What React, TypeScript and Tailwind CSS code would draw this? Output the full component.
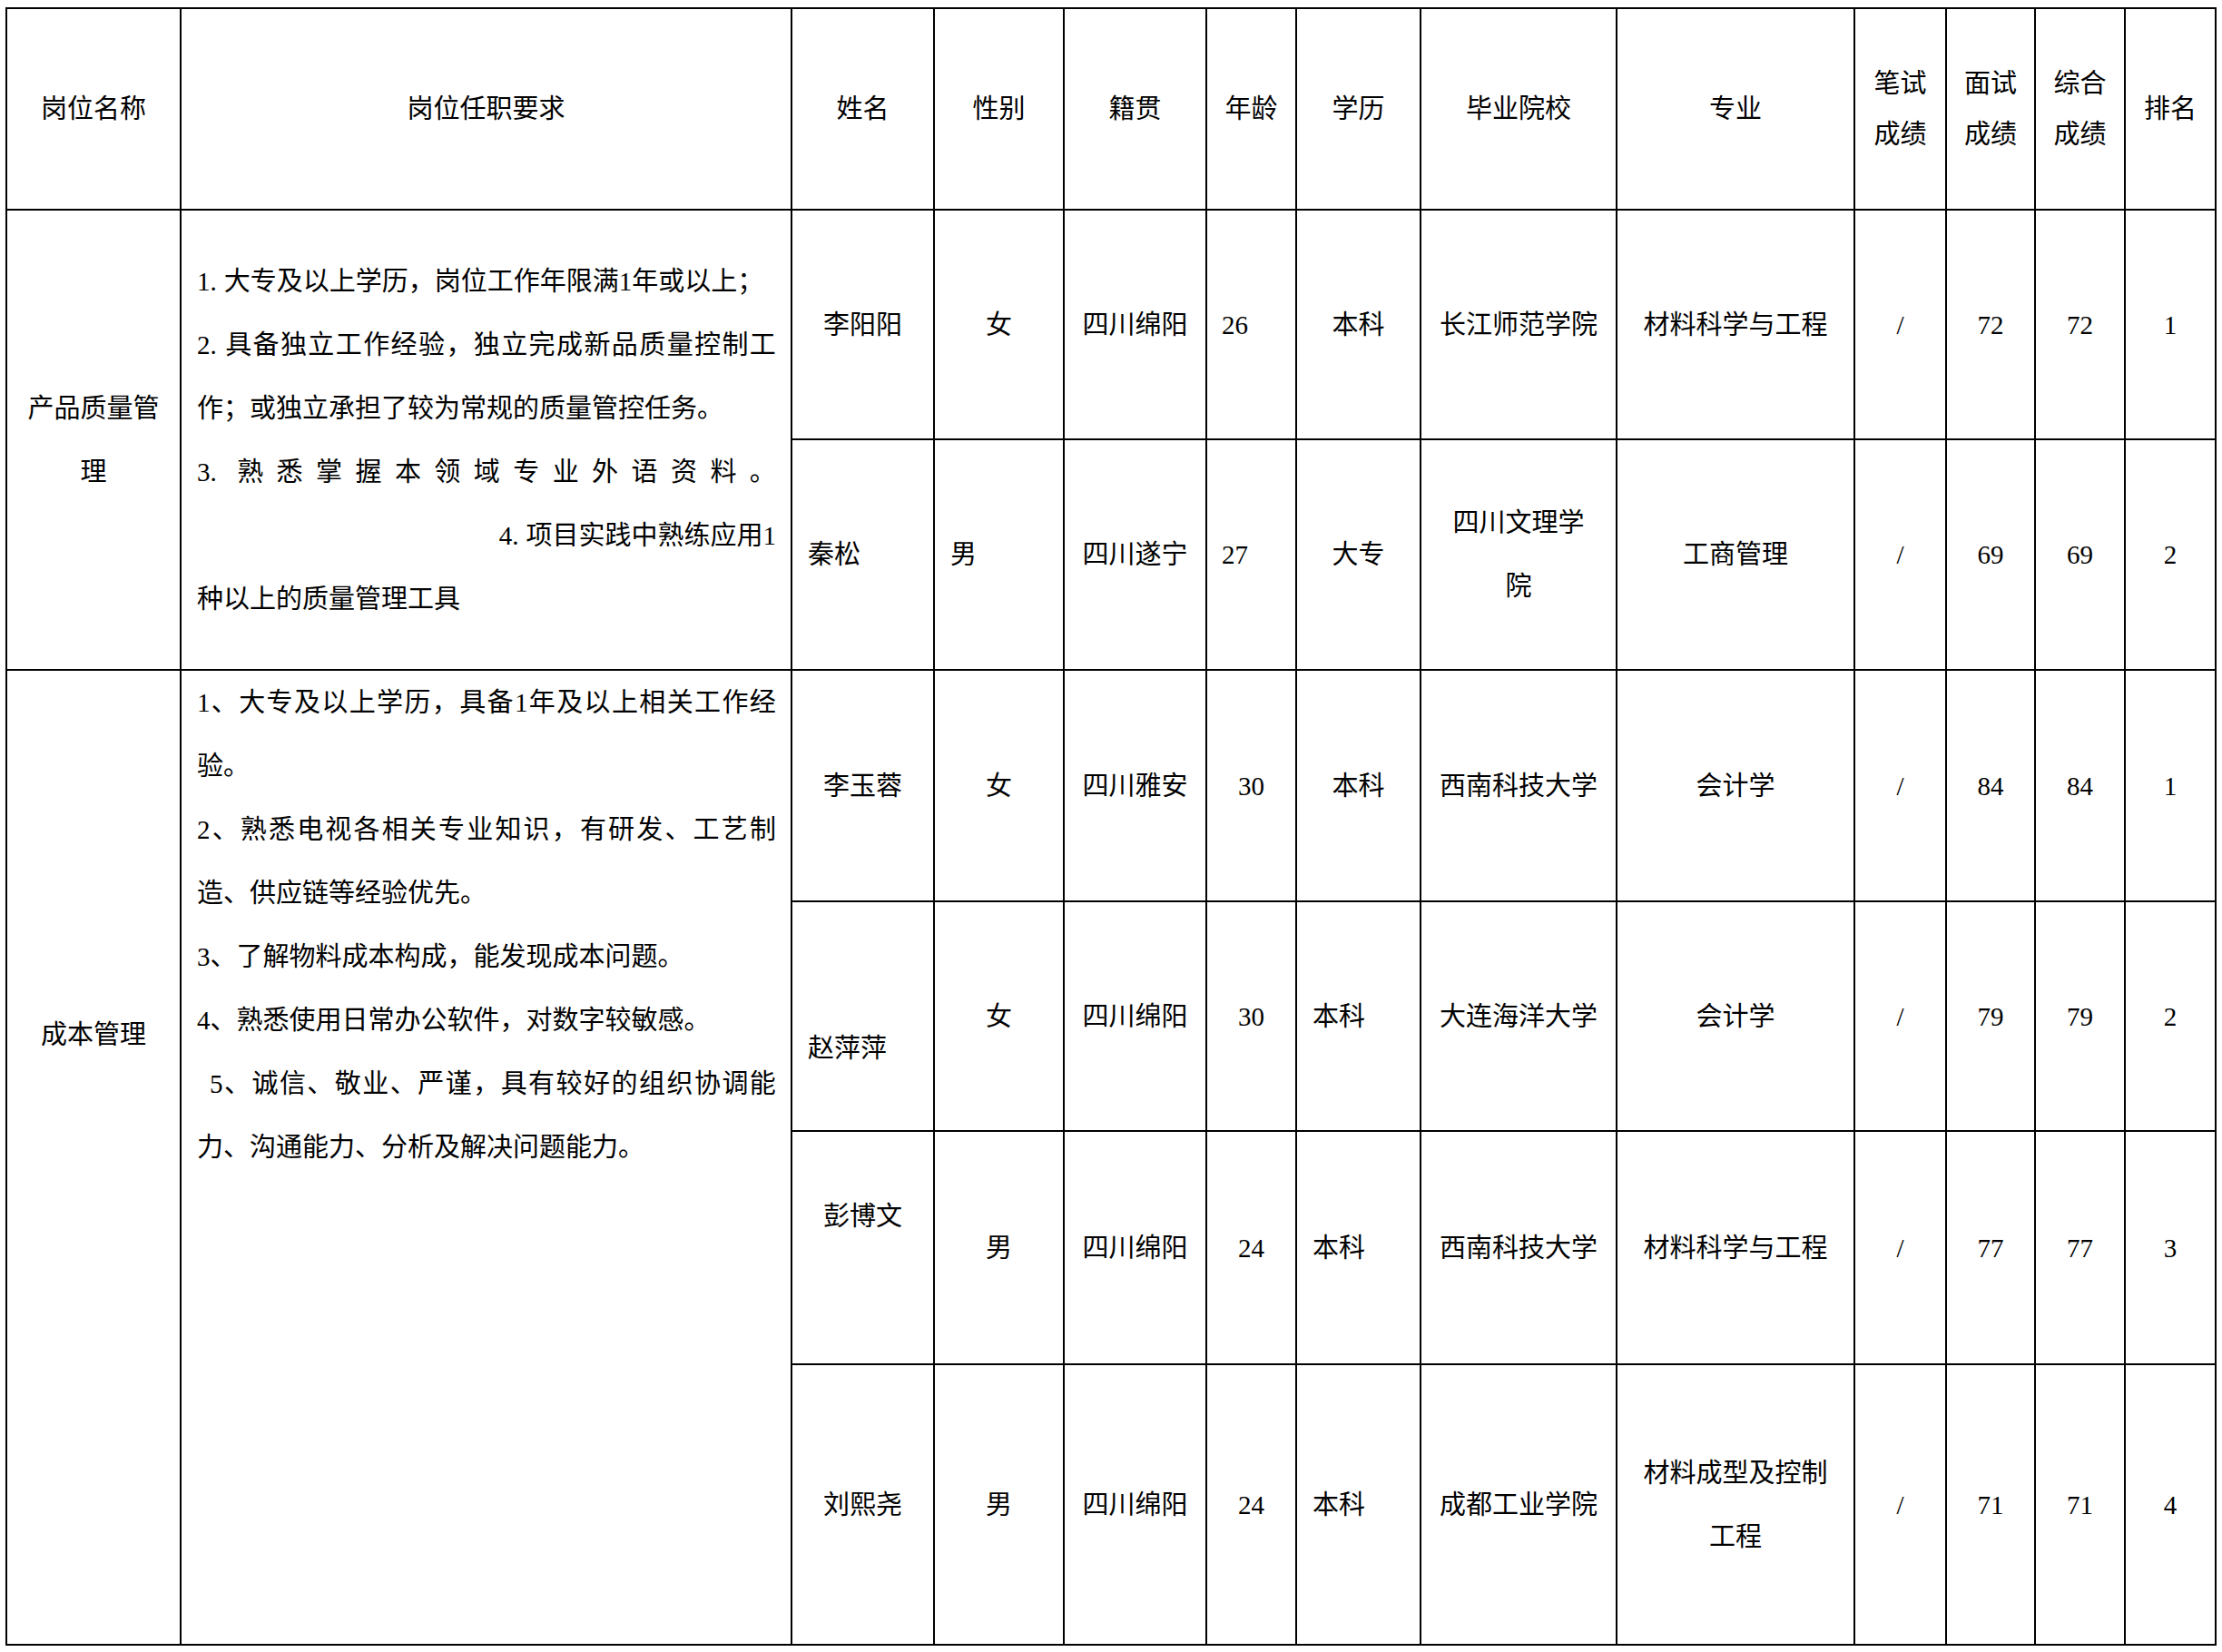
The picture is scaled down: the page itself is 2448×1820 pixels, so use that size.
import type { ReactNode } from "react";
import clsx from "clsx";

// one visual line stretched edge to edge, like Word's justified lines
function Spread({ text, className }: { text: string; className?: string }) {
  const tokens = text.match(/[0-9A-Za-z.]+|./gu) ?? [];
  return (
    <div className={clsx("flex justify-between", className)}>
      {tokens.map((t, i) => (
        <span key={i} className={t.endsWith(".") ? "pr-[8px]" : undefined}>
          {t}
        </span>
      ))}
    </div>
  );
}

function Cell({
  children,
  className,
  lead = "leading-[70px]",
}: {
  children?: ReactNode;
  className?: string;
  lead?: string;
}) {
  return (
    <div
      className={clsx(
        "flex items-center justify-center whitespace-nowrap bg-white text-center",
        lead,
        className
      )}
    >
      {children}
    </div>
  );
}

function Head({ children }: { children: ReactNode }) {
  return <Cell lead="leading-[56px]">{children}</Cell>;
}

function Num({ n }: { n: string }) {
  return <span className="pr-[8px]">{n}</span>;
}

const LEFT = "justify-start pl-[17px] text-left";

type Row = {
  name: ReactNode;
  nameCls?: string;
  gender: string;
  genderCls?: string;
  origin: string;
  age: string;
  ageCls?: string;
  edu: string;
  eduCls?: string;
  school: ReactNode;
  major: ReactNode;
  interview: string;
  total: string;
  rank: string;
};

const rows: Row[] = [
  {
    name: "李阳阳",
    gender: "女",
    origin: "四川绵阳",
    age: "26",
    ageCls: "justify-start pl-[16px]",
    edu: "本科",
    school: "长江师范学院",
    major: "材料科学与工程",
    interview: "72",
    total: "72",
    rank: "1",
  },
  {
    name: "秦松",
    nameCls: LEFT,
    gender: "男",
    genderCls: LEFT,
    origin: "四川遂宁",
    age: "27",
    ageCls: "justify-start pl-[16px]",
    edu: "大专",
    school: (
      <>
        四川文理学
        <br />院
      </>
    ),
    major: "工商管理",
    interview: "69",
    total: "69",
    rank: "2",
  },
  {
    name: "李玉蓉",
    gender: "女",
    origin: "四川雅安",
    age: "30",
    edu: "本科",
    school: "西南科技大学",
    major: "会计学",
    interview: "84",
    total: "84",
    rank: "1",
  },
  {
    name: "赵萍萍",
    nameCls: clsx(LEFT, "pt-[70px]"),
    gender: "女",
    origin: "四川绵阳",
    age: "30",
    edu: "本科",
    eduCls: LEFT,
    school: "大连海洋大学",
    major: "会计学",
    interview: "79",
    total: "79",
    rank: "2",
  },
  {
    name: "彭博文",
    nameCls: "pb-[70px]",
    gender: "男",
    origin: "四川绵阳",
    age: "24",
    edu: "本科",
    eduCls: LEFT,
    school: "西南科技大学",
    major: "材料科学与工程",
    interview: "77",
    total: "77",
    rank: "3",
  },
  {
    name: "刘熙尧",
    gender: "男",
    origin: "四川绵阳",
    age: "24",
    edu: "本科",
    eduCls: LEFT,
    school: "成都工业学院",
    major: (
      <>
        材料成型及控制
        <br />
        工程
      </>
    ),
    interview: "71",
    total: "71",
    rank: "4",
  },
];

function RowCells({ r }: { r: Row }) {
  return (
    <>
      <Cell className={r.nameCls}>{r.name}</Cell>
      <Cell className={r.genderCls}>{r.gender}</Cell>
      <Cell>{r.origin}</Cell>
      <Cell className={r.ageCls}>{r.age}</Cell>
      <Cell className={r.eduCls}>{r.edu}</Cell>
      <Cell>{r.school}</Cell>
      <Cell>{r.major}</Cell>
      <Cell>/</Cell>
      <Cell>{r.interview}</Cell>
      <Cell>{r.total}</Cell>
      <Cell>{r.rank}</Cell>
    </>
  );
}

export default function App() {
  return (
    <div className="min-h-screen bg-white pl-[6px] pt-[8px] font-['Liberation_Serif','Noto_Sans_CJK_SC',serif] text-[29px] text-black">
      <div className="grid w-fit grid-cols-[190px_671px_155px_141px_155px_97px_135px_214px_260px_99px_96px_97px_98px] grid-rows-[220px_251px_252px_253px_251px_255px_307px] gap-[2px] bg-black p-[2px]">
        <Head>岗位名称</Head>
        <Head>岗位任职要求</Head>
        <Head>姓名</Head>
        <Head>性别</Head>
        <Head>籍贯</Head>
        <Head>年龄</Head>
        <Head>学历</Head>
        <Head>毕业院校</Head>
        <Head>专业</Head>
        <Head>
          笔试
          <br />
          成绩
        </Head>
        <Head>
          面试
          <br />
          成绩
        </Head>
        <Head>
          综合
          <br />
          成绩
        </Head>
        <Head>排名</Head>

        <Cell className="row-span-2">
          产品质量管
          <br />理
        </Cell>
        <div className="row-span-2 flex flex-col justify-center whitespace-nowrap bg-white pl-[17px] pr-[16px] leading-[70px]">
          <div>
            <Num n="1." />
            大专及以上学历，岗位工作年限满1年或以上；
          </div>
          <Spread text="2.具备独立工作经验，独立完成新品质量控制工" />
          <div>作；或独立承担了较为常规的质量管控任务。</div>
          <Spread text="3.熟悉掌握本领域专业外语资料。" />
          <div className="text-right">
            <Num n="4." />
            项目实践中熟练应用1
          </div>
          <div>种以上的质量管理工具</div>
        </div>
        <RowCells r={rows[0]} />
        <RowCells r={rows[1]} />

        <Cell className="row-span-4 pb-[270px]">成本管理</Cell>
        <div className="row-span-4 flex flex-col whitespace-nowrap bg-white pl-[17px] pr-[16px] leading-[70px]">
          <Spread text="1、大专及以上学历，具备1年及以上相关工作经" />
          <div>验。</div>
          <Spread text="2、熟悉电视各相关专业知识，有研发、工艺制" />
          <div>造、供应链等经验优先。</div>
          <div>3、了解物料成本构成，能发现成本问题。</div>
          <div>4、熟悉使用日常办公软件，对数字较敏感。</div>
          <Spread text="5、诚信、敬业、严谨，具有较好的组织协调能" className="pl-[14px]" />
          <div>力、沟通能力、分析及解决问题能力。</div>
        </div>
        <RowCells r={rows[2]} />
        <RowCells r={rows[3]} />
        <RowCells r={rows[4]} />
        <RowCells r={rows[5]} />
      </div>
    </div>
  );
}
